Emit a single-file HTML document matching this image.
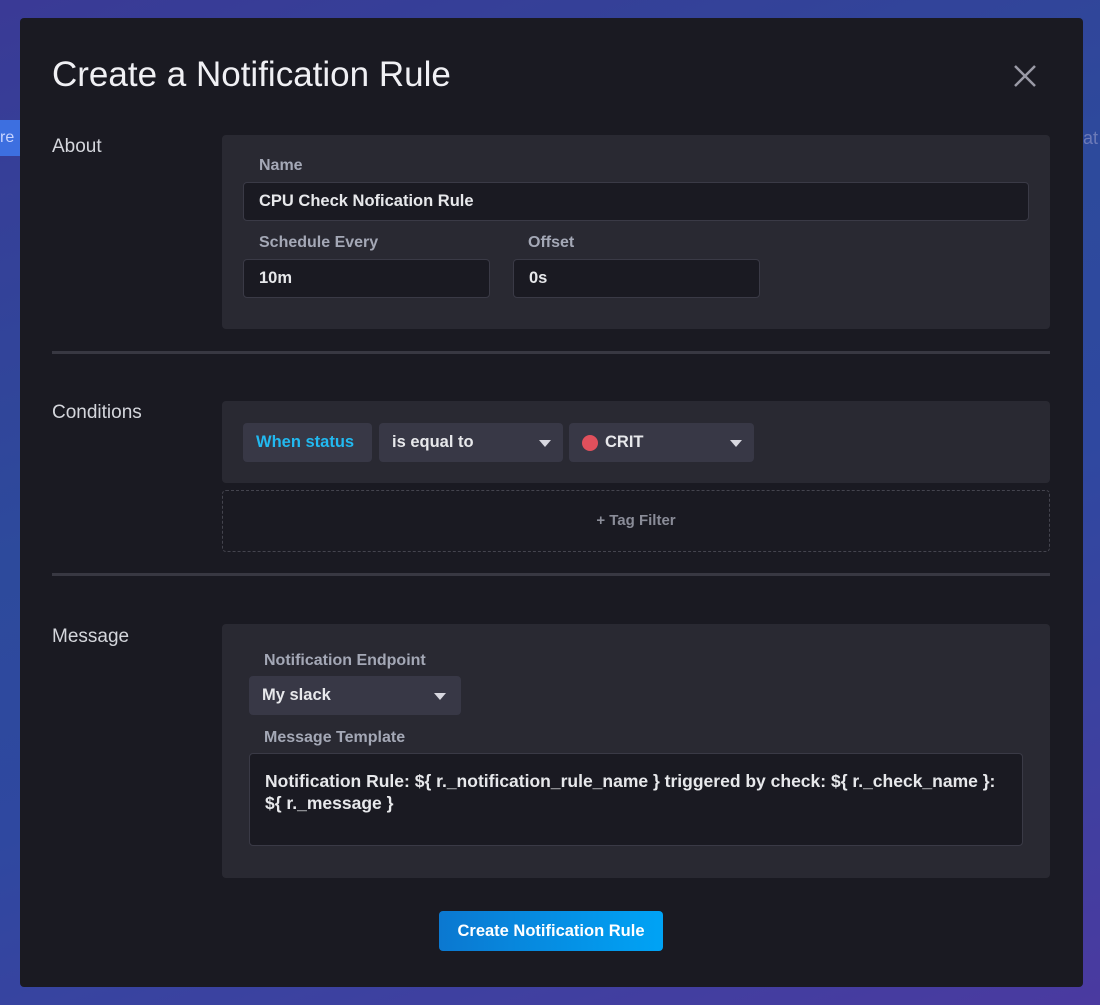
<!DOCTYPE html>
<html><head><meta charset="utf-8"><style>
*{margin:0;padding:0;box-sizing:border-box}
body{width:1100px;height:1005px;overflow:hidden;font-family:"Liberation Sans",sans-serif;background:linear-gradient(160deg,#3a3a96 0%,#2d4a9c 40%,#2f48a0 60%,#4a3aa0 100%);position:relative}
.a{position:absolute}
.modal{left:20px;top:18px;width:1063px;height:969px;background:#1a1a22;border-radius:4px}
.title{left:52px;top:55px;font-size:35px;color:#f0f0f4}
.sec{font-size:19px;color:#d4d6dc;left:52px}
.panel{background:#292932;border-radius:4px}
.lbl{font-size:16px;font-weight:bold;color:#a4a8b6}
.inp{background:#1a1a22;border:1.5px solid #3a3a46;border-radius:4px;color:#e7e8eb;font-size:16.5px;font-weight:bold;padding-left:15px;display:flex;align-items:center}
.sel{background:#383846;border-radius:4px;color:#e7e8eb;font-size:16.5px;font-weight:bold;display:flex;align-items:center;padding-left:13px}
.car{position:absolute;right:12px;top:50%;margin-top:-3px;width:0;height:0;border-left:6px solid transparent;border-right:6px solid transparent;border-top:7px solid #d8d8e0}
.hr{left:52px;width:998px;height:3px;background:#383842}
</style></head><body>
<div class="a" style="left:0;top:120px;width:20px;height:36px;background:#3d6fe0;color:#c8d4ff;font-size:16px;line-height:36px">re</div>
<div class="a" style="left:1083px;top:128px;color:#6c7ab8;font-size:18px">at</div>
<div class="a modal"></div>
<div class="a title">Create a Notification Rule</div>
<svg class="a" style="left:1013px;top:64px" width="24" height="24"><path d="M2 2L22 22M22 2L2 22" stroke="#9a9aa6" stroke-width="2.5"/></svg>

<div class="a sec" style="top:136px">About</div>
<div class="a panel" style="left:222px;top:135px;width:828px;height:194px"></div>
<div class="a lbl" style="left:259px;top:157px">Name</div>
<div class="a inp" style="left:243px;top:182px;width:786px;height:39px">CPU Check Nofication Rule</div>
<div class="a lbl" style="left:259px;top:234px">Schedule Every</div>
<div class="a inp" style="left:243px;top:259px;width:247px;height:39px">10m</div>
<div class="a lbl" style="left:528px;top:234px">Offset</div>
<div class="a inp" style="left:513px;top:259px;width:247px;height:39px">0s</div>
<div class="a hr" style="top:351px"></div>

<div class="a sec" style="top:402px">Conditions</div>
<div class="a panel" style="left:222px;top:401px;width:828px;height:82px"></div>
<div class="a sel" style="left:243px;top:423px;width:129px;height:39px;color:#22b9f0">When status</div>
<div class="a sel" style="left:379px;top:423px;width:184px;height:39px">is equal to<div class="car"></div></div>
<div class="a sel" style="left:569px;top:423px;width:185px;height:39px"><span style="display:inline-block;width:16px;height:16px;border-radius:50%;background:#e0505c;margin-right:7px"></span>CRIT<div class="car"></div></div>
<div class="a" style="left:222px;top:490px;width:828px;height:62px;border:1.5px dashed #44444e;border-radius:4px;color:#8a8c98;font-size:15px;font-weight:bold;text-align:center;line-height:60px">+ Tag Filter</div>
<div class="a hr" style="top:573px"></div>

<div class="a sec" style="top:626px">Message</div>
<div class="a panel" style="left:222px;top:624px;width:828px;height:254px"></div>
<div class="a lbl" style="left:264px;top:652px">Notification Endpoint</div>
<div class="a sel" style="left:249px;top:676px;width:212px;height:39px">My slack<div class="car" style="right:15px"></div></div>
<div class="a lbl" style="left:264px;top:729px">Message Template</div>
<div class="a inp" style="left:249px;top:753px;width:774px;height:93px;align-items:flex-start;padding-top:16px;line-height:22px;font-size:17.5px">Notification Rule: ${ r._notification_rule_name } triggered by check: ${ r._check_name }:<br>${ r._message }</div>

<div class="a" style="left:439px;top:911px;width:224px;height:40px;border-radius:4px;background:linear-gradient(90deg,#0b78d0,#00a3f5);color:#fff;font-size:16.5px;font-weight:bold;text-align:center;line-height:40px">Create Notification Rule</div>
</body></html>
